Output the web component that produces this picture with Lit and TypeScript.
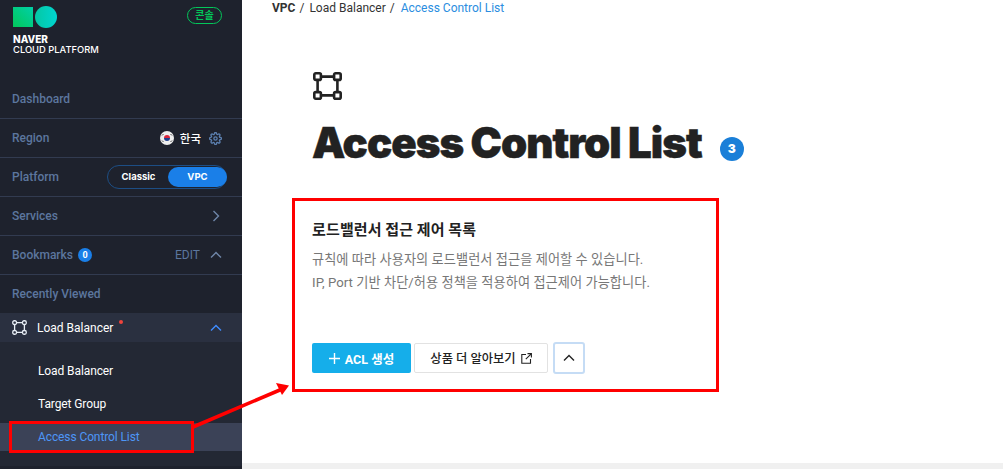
import { html, css, LitElement } from 'lit';
import { customElement } from 'lit/decorators.js';

const nodesIcon = html`<svg viewBox="0 0 30 30" fill="none" stroke="currentColor" stroke-width="2.6">
  <rect x="2.300" y="2.300" width="6.600" height="6.600" rx="1.500" />
  <rect x="22.100" y="2.300" width="6.600" height="6.600" rx="1.500" />
  <rect x="2.300" y="21.100" width="6.600" height="6.600" rx="1.500" />
  <rect x="22.100" y="21.100" width="6.600" height="6.600" rx="1.500" />
  <path d="M9 5.600h13M9 24.400h13M5.600 9v12M25.400 9v12" />
</svg>`;

const chevronUp = html`<svg class="chev" viewBox="0 0 12 8" fill="none" stroke="currentColor" stroke-width="1.4">
  <path d="M1 6.6 6 1.6l5 5" />
</svg>`;

@customElement('app-root')
export class AppRoot extends LitElement {
  static styles = css`
    :host {
      display: flex;
      width: 1003px;
      height: 469px;
      position: relative;
      overflow: hidden;
      background: #fff;
      font-family: Roboto, 'Noto Sans CJK KR', sans-serif;
    }

    /* sidebar */
    .side {
      width: 242px;
      flex: none;
      background: #1e222d;
      color: #5c769e;
      font-size: 12px;
      font-weight: 500;
      display: flex;
      flex-direction: column;
    }
    .brand {
      height: 79px;
      box-sizing: border-box;
      padding: 6px 20px 0 13px;
      display: flex;
      justify-content: space-between;
      align-items: flex-start;
    }
    .logo-shapes {
      display: flex;
      gap: 2px;
      align-items: center;
    }
    .logo-square {
      width: 20px;
      height: 20px;
      background: linear-gradient(45deg, #03c75a, #00d0a8);
    }
    .logo-circle {
      width: 22px;
      height: 22px;
      border-radius: 50%;
      background: linear-gradient(90deg, #04c8a4, #00d5d0);
    }
    .logo-text {
      margin-top: 6px;
      color: #fff;
      font-size: 9.4px;
      line-height: 10px;
      font-family: Inter, sans-serif;
      font-weight: 500;
    }
    .logo-text b {
      display: block;
      margin-bottom: 1px;
      font-size: 10px;
      font-weight: 800;
    }
    .console {
      margin-top: 1px;
      width: 35px;
      height: 17px;
      box-sizing: border-box;
      border: 1px solid #03c75a;
      border-radius: 9px;
      color: #03c75a;
      font-size: 10px;
      font-weight: 700;
      line-height: 14px;
      text-align: center;
      font-family: 'Noto Sans CJK KR', sans-serif;
    }
    .row {
      height: 39px;
      box-sizing: border-box;
      border-top: 1px solid #323b50;
      padding: 0 20px 0 12px;
      display: flex;
      align-items: center;
      justify-content: space-between;
    }
    .row.first {
      border-top: none;
    }
    .left,
    .right {
      display: flex;
      align-items: center;
    }
    .flag {
      width: 14px;
      height: 14px;
      margin-right: 6px;
    }
    .ko {
      color: #fff;
      font-size: 11.5px;
      font-family: 'Noto Sans CJK KR', sans-serif;
      margin-right: 8px;
    }
    .gear {
      width: 13px;
      height: 13px;
      color: #5c80b0;
    }
    .switch {
      width: 120px;
      height: 24px;
      box-sizing: border-box;
      border: 1px solid #1d4e84;
      border-radius: 12px;
      padding: 1px;
      margin-right: -5px;
      display: grid;
      grid-template-columns: 59px 59px;
      font-size: 9.5px;
      font-weight: 700;
      font-family: Inter, sans-serif;
      color: #fff;
      text-align: center;
      line-height: 20px;
    }
    .switch .on {
      background: #1a7fe8;
      border-radius: 10px;
    }
    .chev {
      width: 12px;
      height: 8px;
      color: #6f86a8;
    }
    .count {
      width: 14px;
      height: 14px;
      border-radius: 50%;
      background: #1a7fe8;
      color: #fff;
      font-size: 9px;
      font-weight: 700;
      line-height: 14px;
      text-align: center;
      margin-left: 5px;
    }
    .edit {
      font-weight: 400;
      margin-right: 10px;
    }
    .right-chev {
      width: 8px;
      height: 12px;
      margin-right: 2px;
      color: #6f86a8;
    }
    .group {
      height: 29px;
      background: #2a3040;
      padding: 0 20px 0 12px;
      display: flex;
      align-items: center;
      justify-content: space-between;
      color: #fff;
      font-weight: 400;
    }
    .group svg.node {
      width: 15px;
      height: 15px;
      margin-right: 10px;
      color: #e8eef5;
    }
    .group .dot {
      width: 4px;
      height: 4px;
      border-radius: 50%;
      background: #f0443c;
      margin: -11px 0 0 6px;
    }
    .group .chev {
      color: #3f8cff;
    }
    .sub {
      flex: 1;
      background: #232834;
      padding-top: 15px;
      box-sizing: border-box;
    }
    .sub div {
      height: 33px;
      line-height: 28px;
      padding-left: 38px;
      color: #fff;
      font-weight: 400;
      letter-spacing: -0.1px;
    }
    .sub div.active {
      height: 28px;
      background: #3b4257;
      color: #4d96f7;
    }
    .sub-foot {
      height: 3px;
      background: #1e222d;
    }

    /* main */
    .main {
      flex: 1;
      display: flex;
      flex-direction: column;
      color: #222;
    }
    .content {
      flex: 1;
    }
    .crumbs {
      padding: 1px 0 0 30px;
      height: 15px;
      font-size: 12px;
      line-height: 14px;
      color: #333;
      display: flex;
      gap: 4px;
    }
    .crumbs b {
      font-weight: 700;
    }
    .crumbs .lb {
      margin-left: 1px;
    }
    .crumbs .now {
      color: #2b8de0;
      margin-left: 2px;
    }
    .body {
      padding: 55px 0 0 70px;
    }
    .big-icon {
      display: block;
      width: 30px;
      height: 30px;
      color: #222;
    }
    .title {
      display: flex;
      align-items: center;
      margin: 15px 0 0;
    }
    h1 {
      margin: 0;
      font-family: Inter, sans-serif;
      font-size: 42px;
      line-height: 54px;
      font-weight: 900;
      letter-spacing: -1px;
      -webkit-text-stroke: 0.5px #222;
      color: #222;
    }
    .title span {
      margin-left: 18px;
      margin-top: 11px;
      width: 24px;
      height: 24px;
      border-radius: 50%;
      background: #1a7fd8;
      color: #fff;
      font-family: Inter, sans-serif;
      font-size: 12px;
      font-weight: 900;
      line-height: 24px;
      text-align: center;
    }
    h2 {
      margin: 49px 0 0;
      font-family: 'Noto Sans CJK KR', sans-serif;
      font-size: 15px;
      line-height: 20px;
      font-weight: 700;
      letter-spacing: 0.15px;
      color: #222;
    }
    p {
      margin: 9px 0 0;
      font-size: 13.2px;
      line-height: 23px;
      letter-spacing: 0.05px;
      color: #777;
      font-family: Roboto, 'Noto Sans CJK KR', sans-serif;
    }
    .actions {
      margin-top: 48px;
      display: flex;
      align-items: center;
    }
    .btn {
      height: 30px;
      box-sizing: border-box;
      border-radius: 2px;
      display: flex;
      align-items: center;
      justify-content: center;
      font-size: 12.5px;
      font-weight: 700;
    }
    .primary {
      width: 99px;
      background: #15aeea;
      color: #fff;
      gap: 5px;
    }
    .primary svg {
      width: 11px;
      height: 11px;
    }
    .ghost {
      width: 134px;
      margin-left: 3px;
      border: 1px solid #e2e2e2;
      color: #222;
      font-size: 12.3px;
      font-weight: 500;
      gap: 5px;
    }
    .ghost svg {
      width: 11px;
      height: 11px;
    }
    .toggle {
      width: 32px;
      height: 32px;
      margin-left: 5px;
      box-sizing: border-box;
      border: 2px solid #c5dcf5;
      border-radius: 3px;
      display: flex;
      align-items: center;
      justify-content: center;
      color: #222;
    }
    .toggle .chev {
      color: #222;
    }
    .bottom {
      height: 6px;
      background: #f0f0f0;
    }

    /* red annotations drawn over the screenshot */
    .mark {
      position: absolute;
      box-sizing: border-box;
      border: 3px solid #f00;
    }
    .mark.box {
      left: 292px;
      top: 198px;
      width: 427px;
      height: 194px;
    }
    .mark.item {
      left: 9px;
      top: 421px;
      width: 185px;
      height: 32px;
    }
    .arrow {
      position: absolute;
      left: 185px;
      top: 375px;
      width: 110px;
      height: 60px;
    }
  `;

  render() {
    return html`
      <aside class="side">
        <div class="brand">
          <div>
            <div class="logo-shapes">
              <div class="logo-square"></div>
              <div class="logo-circle"></div>
            </div>
            <div class="logo-text"><b>NAVER</b>CLOUD PLATFORM</div>
          </div>
          <div class="console">콘솔</div>
        </div>
        <div class="row first"><div class="left">Dashboard</div></div>
        <div class="row">
          <div class="left">Region</div>
          <div class="right">
            <svg class="flag" viewBox="0 0 14 14">
              <circle cx="7" cy="7" r="7" fill="#eee" />
              <path d="M4 7a3 3 0 0 1 6 0z" fill="#d8263c" />
              <path d="M4 7a3 3 0 0 0 6 0z" fill="#1f3f8c" />
              <path d="M2 4.500l1.500-1.500M10.500 3 12 4.500M2 9.500 3.500 11M10.500 11 12 9.500" stroke="#444" stroke-width="1" />
            </svg>
            <span class="ko">한국</span>
            <svg class="gear" viewBox="0 0 24 24" fill="none" stroke="currentColor" stroke-width="2.4">
              <circle cx="12" cy="12" r="3" />
              <path d="M19.4 15a1.65 1.65 0 0 0 .33 1.82l.06.06a2 2 0 0 1 0 2.83 2 2 0 0 1-2.83 0l-.06-.06a1.65 1.65 0 0 0-1.82-.33 1.65 1.65 0 0 0-1 1.51V21a2 2 0 0 1-2 2 2 2 0 0 1-2-2v-.09A1.65 1.65 0 0 0 9 19.4a1.65 1.65 0 0 0-1.82.33l-.06.06a2 2 0 0 1-2.83 0 2 2 0 0 1 0-2.83l.06-.06a1.65 1.65 0 0 0 .33-1.82 1.65 1.65 0 0 0-1.51-1H3a2 2 0 0 1-2-2 2 2 0 0 1 2-2h.09A1.65 1.65 0 0 0 4.6 9a1.65 1.65 0 0 0-.33-1.82l-.06-.06a2 2 0 0 1 0-2.83 2 2 0 0 1 2.83 0l.06.06a1.65 1.65 0 0 0 1.82.33H9a1.65 1.65 0 0 0 1-1.51V3a2 2 0 0 1 2-2 2 2 0 0 1 2 2v.09a1.65 1.65 0 0 0 1 1.51 1.65 1.65 0 0 0 1.82-.33l.06-.06a2 2 0 0 1 2.83 0 2 2 0 0 1 0 2.83l-.06.06a1.65 1.65 0 0 0-.33 1.82V9a1.65 1.65 0 0 0 1.51 1H21a2 2 0 0 1 2 2 2 2 0 0 1-2 2h-.09a1.65 1.65 0 0 0-1.51 1z" />
            </svg>
          </div>
        </div>
        <div class="row">
          <div class="left">Platform</div>
          <div class="switch"><div>Classic</div><div class="on">VPC</div></div>
        </div>
        <div class="row">
          <div class="left">Services</div>
          <svg class="right-chev" viewBox="0 0 8 12" fill="none" stroke="currentColor" stroke-width="1.4">
            <path d="M1.500 1 6.500 6l-5 5" />
          </svg>
        </div>
        <div class="row">
          <div class="left">Bookmarks<span class="count">0</span></div>
          <div class="right"><span class="edit">EDIT</span>${chevronUp}</div>
        </div>
        <div class="row">
          <div class="left">Recently Viewed</div>
        </div>
        <div class="group">
          <div class="left">
            <svg class="node" viewBox="0 0 30 30" fill="none" stroke="currentColor" stroke-width="2.6">
              <rect x="1.500" y="1.500" width="7.500" height="7.500" rx="3" />
              <rect x="21" y="1.500" width="7.500" height="7.500" rx="3" />
              <rect x="1.500" y="21" width="7.500" height="7.500" rx="3" />
              <rect x="21" y="21" width="7.500" height="7.500" rx="3" />
              <path d="M9 5.200h12M9 24.800h12M5.200 9v12M24.800 9v12" />
            </svg>
            Load Balancer<i class="dot"></i>
          </div>
          ${chevronUp}
        </div>
        <div class="sub">
          <div>Load Balancer</div>
          <div>Target Group</div>
          <div class="active">Access Control List</div>
        </div>
        <div class="sub-foot"></div>
      </aside>

      <main class="main">
        <div class="content">
          <nav class="crumbs">
            <b>VPC</b><span>/</span><span class="lb">Load Balancer</span><span>/</span><span class="now">Access Control List</span>
          </nav>
          <div class="body">
            <div class="big-icon">${nodesIcon}</div>
            <div class="title"><h1>Access Control List</h1><span>3</span></div>
            <h2>로드밸런서 접근 제어 목록</h2>
            <p>규칙에 따라 사용자의 로드밸런서 접근을 제어할 수 있습니다.<br />IP, Port 기반 차단/허용 정책을 적용하여 접근제어 가능합니다.</p>
            <div class="actions">
              <div class="btn primary">
                <svg viewBox="0 0 11 11" fill="none" stroke="currentColor" stroke-width="1.4"><path d="M5.500 0v11M0 5.500h11" /></svg>
                ACL 생성
              </div>
              <div class="btn ghost">
                상품 더 알아보기
                <svg viewBox="0 0 11 11" fill="none" stroke="currentColor" stroke-width="1.1">
                  <path d="M5 1.500H.8v8.700h8.700V6M6.500.6h3.900v3.900M10.200.8 4.800 6.200" />
                </svg>
              </div>
              <div class="toggle">${chevronUp}</div>
            </div>
          </div>
        </div>
        <div class="bottom"></div>
      </main>

      <div class="mark box"></div>
      <div class="mark item"></div>
      <svg class="arrow" viewBox="0 0 110 60" fill="none">
        <path d="M8 52 96 14.500" stroke="#f00" stroke-width="3.600" />
        <path d="M104 10.500 91 8l6 12z" fill="#f00" />
      </svg>
    `;
  }
}
